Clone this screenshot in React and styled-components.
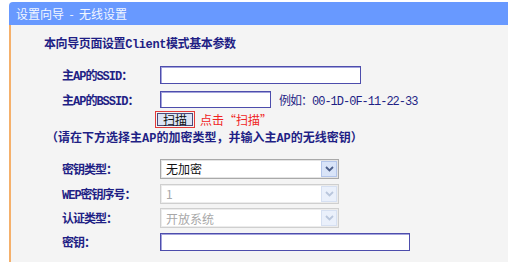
import React from "react";
import styled, { createGlobalStyle } from "styled-components";

const GlobalStyle = createGlobalStyle`
  html, body {
    margin: 0;
    padding: 0;
    background: #ffffff;
  }
  body {
    font-family: "Liberation Mono", "Noto Sans CJK SC", monospace;
    font-size: 12px;
  }
`;

const Page = styled.div`
  width: 508px;
  height: 262px;
  padding: 2px 0 0 9px;
  box-sizing: border-box;
  overflow: hidden;
`;

const Header = styled.div`
  height: 23px;
  line-height: 23px;
  background: #6899ff;
  border-radius: 4px 0 0 0;
  color: #f2f6ff;
  padding-left: 7px;
  font-family: "Noto Sans CJK SC", sans-serif;
  font-size: 12px;
  white-space: pre;
`;

const Panel = styled.div`
  height: 237px;
  background: #f4f4f4;
  border-left: 2px solid #f5b06b;
  box-sizing: border-box;
  padding-top: 13px;
  color: #1f1f85;
`;

const Intro = styled.div`
  height: 14px;
  line-height: 14px;
  padding-left: 33px;
  font-weight: bold;
  letter-spacing: -0.4px;
`;

const Form = styled.div`
  padding-left: 51px;
  margin-top: 10px;
`;

const Row = styled.div`
  display: flex;
  align-items: center;
  height: ${(p) => p.$h || 25}px;
`;

const Label = styled.div`
  width: 98px;
  flex-shrink: 0;
  font-weight: bold;
  letter-spacing: -1px;
`;

const TextInput = styled.div`
  width: ${(p) => p.$w}px;
  height: ${(p) => p.$h || 18}px;
  box-sizing: border-box;
  background: #ffffff;
  border: 1px solid #4d4dac;
  box-shadow: inset 1px 1px 0 #a3a3dc;
`;

const Example = styled.span`
  margin-left: 8px;
  color: #1f1f85;
  letter-spacing: -1px;
`;

const ScanFrame = styled.div`
  margin-left: 93px;
  height: 17px;
  width: 40px;
  box-sizing: border-box;
  border: 1px solid #e23a3a;
  padding: 1px;
  display: flex;
`;

const ScanButton = styled.div`
  flex: 1;
  box-sizing: border-box;
  border: 1px solid #4a4a7a;
  background: #dde5f5;
  color: #111111;
  font-family: "Noto Sans CJK SC", sans-serif;
  font-size: 12px;
  line-height: 12px;
  text-align: center;
`;

const RedText = styled.span`
  margin-left: 5px;
  color: #f02424;
  font-family: "Noto Sans CJK SC", sans-serif;
`;

const Hint = styled.div`
  height: 22px;
  line-height: 22px;
  margin-left: -16px;
  margin-bottom: 6px;
  font-weight: bold;
`;

const Select = styled.div`
  width: 179px;
  height: 20px;
  box-sizing: border-box;
  display: flex;
  align-items: center;
  background: #ffffff;
  border: 1px solid ${(p) => (p.$disabled ? "#cfcfcf" : "#a9a9a9")};
  box-shadow: inset 0 0 0 1px ${(p) => (p.$disabled ? "#ececec" : "#e4e4e4")};
  padding: 1px;
`;

const SelectValue = styled.div`
  flex: 1;
  padding-left: 4px;
  font-family: "Noto Sans CJK SC", sans-serif;
  font-size: 12px;
  color: ${(p) => (p.$disabled ? "#a8a8a8" : "#111111")};
`;

const ArrowBox = styled.div`
  width: 16px;
  height: 16px;
  box-sizing: border-box;
  display: flex;
  align-items: center;
  justify-content: center;
  background: ${(p) => (p.$disabled ? "#eaf0fb" : "#d9e4f8")};
  border: 1px solid ${(p) => (p.$disabled ? "#d6e0f2" : "#b3c5ea")};
`;

const Chevron = ({ disabled }) => (
  <svg width="9" height="6" viewBox="0 0 9 6">
    <path
      d="M1 1 L4.5 4.5 L8 1"
      fill="none"
      stroke={disabled ? "#b9c6dc" : "#4c5f8a"}
      strokeWidth="1.8"
    />
  </svg>
);

const Dropdown = ({ value, disabled }) => (
  <Select $disabled={disabled}>
    <SelectValue $disabled={disabled}>{value}</SelectValue>
    <ArrowBox $disabled={disabled}>
      <Chevron disabled={disabled} />
    </ArrowBox>
  </Select>
);

const App = () => {
  return (
    <>
      <GlobalStyle />
      <Page>
        <Header>{"设置向导  -  无线设置"}</Header>
        <Panel>
          <Intro>本向导页面设置Client模式基本参数</Intro>
          <Form>
            <Row $h={26}>
              <Label>主AP的SSID：</Label>
              <TextInput $w={201} />
            </Row>
            <Row $h={23}>
              <Label>主AP的BSSID：</Label>
              <TextInput $w={111} $h={17} />
              <Example>例如：00-1D-0F-11-22-33</Example>
            </Row>
            <Row $h={17}>
              <ScanFrame>
                <ScanButton>扫描</ScanButton>
              </ScanFrame>
              <RedText>点击“扫描”</RedText>
            </Row>
            <Hint>（请在下方选择主AP的加密类型，并输入主AP的无线密钥）</Hint>
            <Row>
              <Label>密钥类型：</Label>
              <Dropdown value="无加密" />
            </Row>
            <Row>
              <Label>WEP密钥序号：</Label>
              <Dropdown value="1" disabled />
            </Row>
            <Row $h={24}>
              <Label>认证类型：</Label>
              <Dropdown value="开放系统" disabled />
            </Row>
            <Row $h={24}>
              <Label>密钥：</Label>
              <TextInput $w={250} />
            </Row>
          </Form>
        </Panel>
      </Page>
    </>
  );
};

export default App;
